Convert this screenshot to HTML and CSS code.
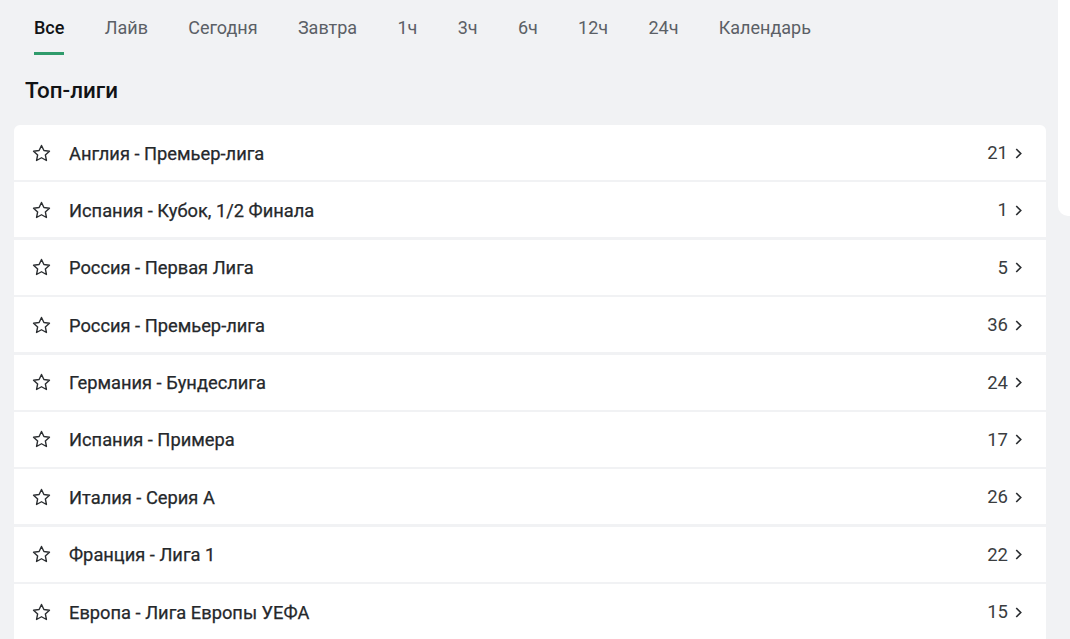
FILE: index.html
```html
<!DOCTYPE html>
<html lang="ru">
<head>
<meta charset="utf-8">
<link rel="stylesheet" href="styles.css">
</head>
<body>
<div class="page">
  <main class="main">
    <nav class="tabs">
      <a class="tab active">Все</a>
      <a class="tab">Лайв</a>
      <a class="tab">Сегодня</a>
      <a class="tab">Завтра</a>
      <a class="tab">1ч</a>
      <a class="tab">3ч</a>
      <a class="tab">6ч</a>
      <a class="tab">12ч</a>
      <a class="tab">24ч</a>
      <a class="tab">Календарь</a>
    </nav>
    <h2 class="title">Топ-лиги</h2>
    <ul class="list">
      <li class="row"><svg class="star" viewBox="0 0 24 24"><path d="M12 2.8l2.75 5.8 6.35.75-4.7 4.35 1.25 6.3L12 16.85 6.35 20l1.25-6.3-4.7-4.35 6.35-.75z"/></svg><span class="name">Англия - Премьер-лига</span><span class="count">21</span><svg class="chev" viewBox="0 0 10 14"><path d="M2.5 2l5 5-5 5"/></svg></li>
      <li class="row"><svg class="star" viewBox="0 0 24 24"><path d="M12 2.8l2.75 5.8 6.35.75-4.7 4.35 1.25 6.3L12 16.85 6.35 20l1.25-6.3-4.7-4.35 6.35-.75z"/></svg><span class="name">Испания - Кубок, 1/2 Финала</span><span class="count">1</span><svg class="chev" viewBox="0 0 10 14"><path d="M2.5 2l5 5-5 5"/></svg></li>
      <li class="row"><svg class="star" viewBox="0 0 24 24"><path d="M12 2.8l2.75 5.8 6.35.75-4.7 4.35 1.25 6.3L12 16.85 6.35 20l1.25-6.3-4.7-4.35 6.35-.75z"/></svg><span class="name">Россия - Первая Лига</span><span class="count">5</span><svg class="chev" viewBox="0 0 10 14"><path d="M2.5 2l5 5-5 5"/></svg></li>
      <li class="row"><svg class="star" viewBox="0 0 24 24"><path d="M12 2.8l2.75 5.8 6.35.75-4.7 4.35 1.25 6.3L12 16.85 6.35 20l1.25-6.3-4.7-4.35 6.35-.75z"/></svg><span class="name">Россия - Премьер-лига</span><span class="count">36</span><svg class="chev" viewBox="0 0 10 14"><path d="M2.5 2l5 5-5 5"/></svg></li>
      <li class="row"><svg class="star" viewBox="0 0 24 24"><path d="M12 2.8l2.75 5.8 6.35.75-4.7 4.35 1.25 6.3L12 16.85 6.35 20l1.25-6.3-4.7-4.35 6.35-.75z"/></svg><span class="name">Германия - Бундеслига</span><span class="count">24</span><svg class="chev" viewBox="0 0 10 14"><path d="M2.5 2l5 5-5 5"/></svg></li>
      <li class="row"><svg class="star" viewBox="0 0 24 24"><path d="M12 2.8l2.75 5.8 6.35.75-4.7 4.35 1.25 6.3L12 16.85 6.35 20l1.25-6.3-4.7-4.35 6.35-.75z"/></svg><span class="name">Испания - Примера</span><span class="count">17</span><svg class="chev" viewBox="0 0 10 14"><path d="M2.5 2l5 5-5 5"/></svg></li>
      <li class="row"><svg class="star" viewBox="0 0 24 24"><path d="M12 2.8l2.75 5.8 6.35.75-4.7 4.35 1.25 6.3L12 16.85 6.35 20l1.25-6.3-4.7-4.35 6.35-.75z"/></svg><span class="name">Италия - Серия А</span><span class="count">26</span><svg class="chev" viewBox="0 0 10 14"><path d="M2.5 2l5 5-5 5"/></svg></li>
      <li class="row"><svg class="star" viewBox="0 0 24 24"><path d="M12 2.8l2.75 5.8 6.35.75-4.7 4.35 1.25 6.3L12 16.85 6.35 20l1.25-6.3-4.7-4.35 6.35-.75z"/></svg><span class="name">Франция - Лига 1</span><span class="count">22</span><svg class="chev" viewBox="0 0 10 14"><path d="M2.5 2l5 5-5 5"/></svg></li>
      <li class="row"><svg class="star" viewBox="0 0 24 24"><path d="M12 2.8l2.75 5.8 6.35.75-4.7 4.35 1.25 6.3L12 16.85 6.35 20l1.25-6.3-4.7-4.35 6.35-.75z"/></svg><span class="name">Европа - Лига Европы УЕФА</span><span class="count">15</span><svg class="chev" viewBox="0 0 10 14"><path d="M2.5 2l5 5-5 5"/></svg></li>
    </ul>
  </main>
  <aside class="side"></aside>
</div>
</body>
</html>
```
FILE: styles.css
```css
* { box-sizing: border-box; }
html, body {
  margin: 0;
  padding: 0;
  background: #f1f2f4;
  font-family: Roboto, "Liberation Sans", sans-serif;
  overflow: hidden;
}
.page {
  display: grid;
  grid-template-columns: 1046px 1fr;
  column-gap: 12px;
  height: 639px;
  align-items: start;
}
.main {
  padding-left: 14px;
}
.tabs {
  display: flex;
  gap: 40.3px;
  padding-left: 20px;
  height: 55px;
}
.tab {
  display: block;
  font-size: 18px;
  line-height: 20px;
  padding-top: 18px;
  height: 55px;
  color: #5b6066;
  border-bottom: 3px solid transparent;
}
.tab.active {
  color: #111315;
  font-weight: 500;
  border-bottom-color: #2f9b6b;
}
.title {
  margin: 0;
  padding: 22px 0 0 11px;
  height: 70px;
  font-size: 22.4px;
  line-height: 26px;
  font-weight: 500;
  color: #111315;
}
.list {
  list-style: none;
  margin: 0;
  padding: 0;
  display: flex;
  flex-direction: column;
  gap: 2.375px;
}
.row {
  display: flex;
  align-items: center;
  height: 55px;
  background: #fff;
  padding: 1px 23px 0 17px;
}
.row:first-child {
  border-radius: 6px 6px 0 0;
}
.star {
  width: 21px;
  height: 21px;
  fill: none;
  stroke: #2b2e31;
  stroke-width: 1.6;
  stroke-linejoin: round;
  margin-right: 17px;
  flex: none;
}
.name {
  flex: 1;
  font-size: 18.3px;
  font-weight: 400;
  color: #25282b;
  -webkit-text-stroke: 0.25px #25282b;
}
.count {
  font-size: 18.5px;
  color: #3a3d40;
  margin-right: 6px;
}
.chev {
  width: 9px;
  height: 13px;
  fill: none;
  stroke: #2b2e31;
  stroke-width: 1.8;
  flex: none;
}
.side {
  background: #fff;
  height: 216px;
  border-bottom-left-radius: 10px;
}
```
